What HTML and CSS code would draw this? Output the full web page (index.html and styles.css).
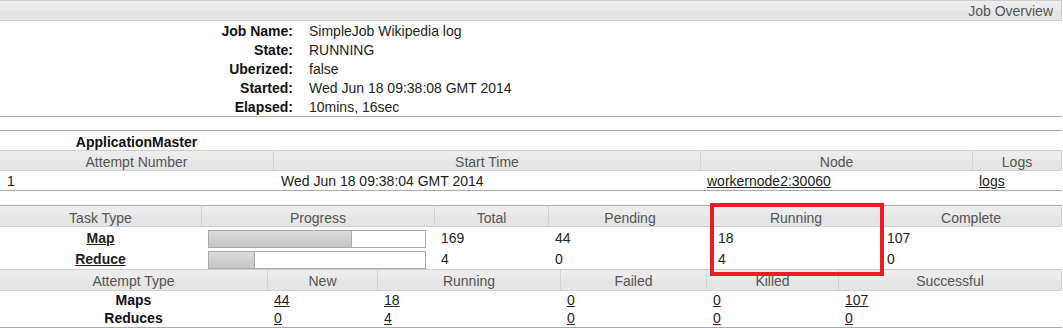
FILE: index.html
```html
<!DOCTYPE html>
<html>
<head>
<meta charset="utf-8">
<title>Job Overview</title>
<link rel="stylesheet" href="styles.css">
</head>
<body>
<div class="page">
  <div class="overview">
    <div class="ov-head">Job Overview</div>
    <div class="info">
      <div class="info-row"><span class="k">Job Name:</span><span class="v">SimpleJob Wikipedia log</span></div>
      <div class="info-row"><span class="k">State:</span><span class="v">RUNNING</span></div>
      <div class="info-row"><span class="k">Uberized:</span><span class="v">false</span></div>
      <div class="info-row"><span class="k">Started:</span><span class="v">Wed Jun 18 09:38:08 GMT 2014</span></div>
      <div class="info-row"><span class="k">Elapsed:</span><span class="v">10mins, 16sec</span></div>
    </div>
  </div>

  <table class="grid am">
    <colgroup>
      <col class="am-c1"><col class="am-c2"><col class="am-c3"><col class="am-c4">
    </colgroup>
    <tr class="cap">
      <td class="cap-title">ApplicationMaster</td><td></td><td></td><td></td>
    </tr>
    <tr class="hdr">
      <th class="first">Attempt Number</th><th>Start Time</th><th>Node</th><th class="last">Logs</th>
    </tr>
    <tr class="row end">
      <td>1</td>
      <td>Wed Jun 18 09:38:04 GMT 2014</td>
      <td><a href="#">workernode2:30060</a></td>
      <td><a href="#">logs</a></td>
    </tr>
  </table>

  <table class="grid tasks">
    <colgroup>
      <col class="t-c1"><col class="t-c2"><col class="t-c3"><col class="t-c4"><col class="t-c5"><col class="t-c6">
    </colgroup>
    <tr class="hdr top">
      <th class="first">Task Type</th><th>Progress</th><th>Total</th><th>Pending</th><th>Running</th><th class="last">Complete</th>
    </tr>
    <tr class="trow">
      <td class="ttype"><a href="#">Map</a></td>
      <td class="prog"><div class="bar"><div class="fill" style="width:143px"></div></div></td>
      <td>169</td><td>44</td><td>18</td><td>107</td>
    </tr>
    <tr class="trow">
      <td class="ttype"><a href="#">Reduce</a></td>
      <td class="prog"><div class="bar"><div class="fill" style="width:46px"></div></div></td>
      <td>4</td><td>0</td><td>4</td><td>0</td>
    </tr>
  </table>

  <table class="grid attempts">
    <colgroup>
      <col class="a-c1"><col class="a-c2"><col class="a-c3"><col class="a-c4"><col class="a-c5"><col class="a-c6">
    </colgroup>
    <tr class="hdr">
      <th class="first">Attempt Type</th><th>New</th><th>Running</th><th>Failed</th><th>Killed</th><th class="last">Successful</th>
    </tr>
    <tr class="arow">
      <td class="atype">Maps</td>
      <td><a href="#">44</a></td><td><a href="#">18</a></td><td><a href="#">0</a></td><td><a href="#">0</a></td><td><a href="#">107</a></td>
    </tr>
    <tr class="arow end">
      <td class="atype">Reduces</td>
      <td><a href="#">0</a></td><td><a href="#">4</a></td><td><a href="#">0</a></td><td><a href="#">0</a></td><td><a href="#">0</a></td>
    </tr>
  </table>

  <div class="redbox"></div>
</div>
</body>
</html>
```

FILE: styles.css
```css
* { box-sizing: border-box; }

body {
  margin: 0;
  font-family: "Liberation Sans", Arial, sans-serif;
  font-size: 14px;
  color: #222;
  background: #fff;
}

.page {
  position: relative;
  width: 1062px;
}

a {
  color: #222;
  text-decoration: underline;
}

/* ---------- Job overview ---------- */
.ov-head {
  border-top: 1px solid #cfcfcf;
  border-bottom: 1px solid #cfcfcf;
  border-right: 1px solid #cfcfcf;
  background: linear-gradient(#ededed 0, #ebebeb 45%, #e4e4e4 55%, #e6e6e6 100%);
  padding: 1px 8px 0 0;
  line-height: 18px;
  text-align: right;
  color: #555;
}

.info {
  border-bottom: 1px solid #aaa;
}

.info-row {
  display: grid;
  grid-template-columns: 293px 1fr;
  column-gap: 16px;
  padding-top: 1px;
  line-height: 18px;
}

.k {
  text-align: right;
  font-weight: bold;
  color: #111;
}

.v {
  color: #222;
}

/* ---------- generic tables ---------- */
.grid {
  border-collapse: separate;
  border-spacing: 0;
  table-layout: fixed;
  width: 1062px;
}

.grid td {
  padding: 0 0 0 7px;
  white-space: nowrap;
}

.hdr th {
  font-weight: normal;
  color: #555;
  text-align: center;
  padding: 3px 0 0 0;
  line-height: 17px;
  background: linear-gradient(#ededed 0, #ebebeb 45%, #e4e4e4 55%, #e6e6e6 100%);
  border-bottom: 1px solid #cfcfcf;
  border-left: 1px solid #d3d3d3;
  white-space: nowrap;
}

.hdr th.first { border-left: none; }
.hdr th.last { border-right: 1px solid #d3d3d3; }

/* ---------- AM table ---------- */
.am { margin-top: 13px; }

.am-c1 { width: 273px; }
.am-c2 { width: 427px; }
.am-c3 { width: 272px; }
.am-c4 { width: 90px; }

.am .cap td {
  border-top: 1px solid #aaa;
  padding: 3px 0 0 0;
  line-height: 16px;
}

.am .cap td.cap-title {
  text-align: center;
  font-weight: bold;
  color: #111;
}

.am .hdr th {
  border-top: 1px solid #cfcfcf;
  padding-top: 3px;
  line-height: 16px;
}

.am .row td {
  padding-top: 1px;
  line-height: 18px;
  border-bottom: 1px solid #aaa;
}

.am .row td:nth-child(2) { padding-left: 8px; }

/* ---------- tasks table ---------- */
.tasks { margin-top: 14px; }

.t-c1 { width: 201px; }
.t-c2 { width: 233px; }
.t-c3 { width: 114px; }
.t-c4 { width: 163px; }
.t-c5 { width: 169px; }
.t-c6 { width: 182px; }

.tasks .hdr th {
  border-top: 1px solid #aaa;
  padding-top: 4px;
  line-height: 16px;
}

.trow td {
  padding-top: 2px;
  line-height: 19px;
  vertical-align: top;
}

.trow td.ttype {
  text-align: center;
  padding-left: 0;
  font-weight: bold;
}

.trow td.prog {
  padding: 3px 0 0 7px;
  line-height: 0;
}

.bar {
  width: 218px;
  height: 18px;
  border: 1px solid #aaa;
  background: #fff;
}

.fill {
  height: 16px;
  background: linear-gradient(#dadada, #c6c6c6);
  border-right: 1px solid #aaa;
}

/* ---------- attempts table ---------- */
.a-c1 { width: 267px; }
.a-c2 { width: 110px; }
.a-c3 { width: 183px; }
.a-c4 { width: 146px; }
.a-c5 { width: 132px; }
.a-c6 { width: 224px; }

.attempts .hdr th {
  border-top: 1px solid #cfcfcf;
}

.arow td {
  padding-top: 1px;
  line-height: 17px;
}

.arow.end td {
  border-bottom: 1px solid #aaa;
}

.arow td.atype {
  text-align: center;
  padding-left: 0;
  font-weight: bold;
  color: #111;
}

/* ---------- annotation ---------- */
.redbox {
  position: absolute;
  left: 710px;
  top: 203px;
  width: 174px;
  height: 73px;
  border: 4px solid #ed1c24;
}
```
